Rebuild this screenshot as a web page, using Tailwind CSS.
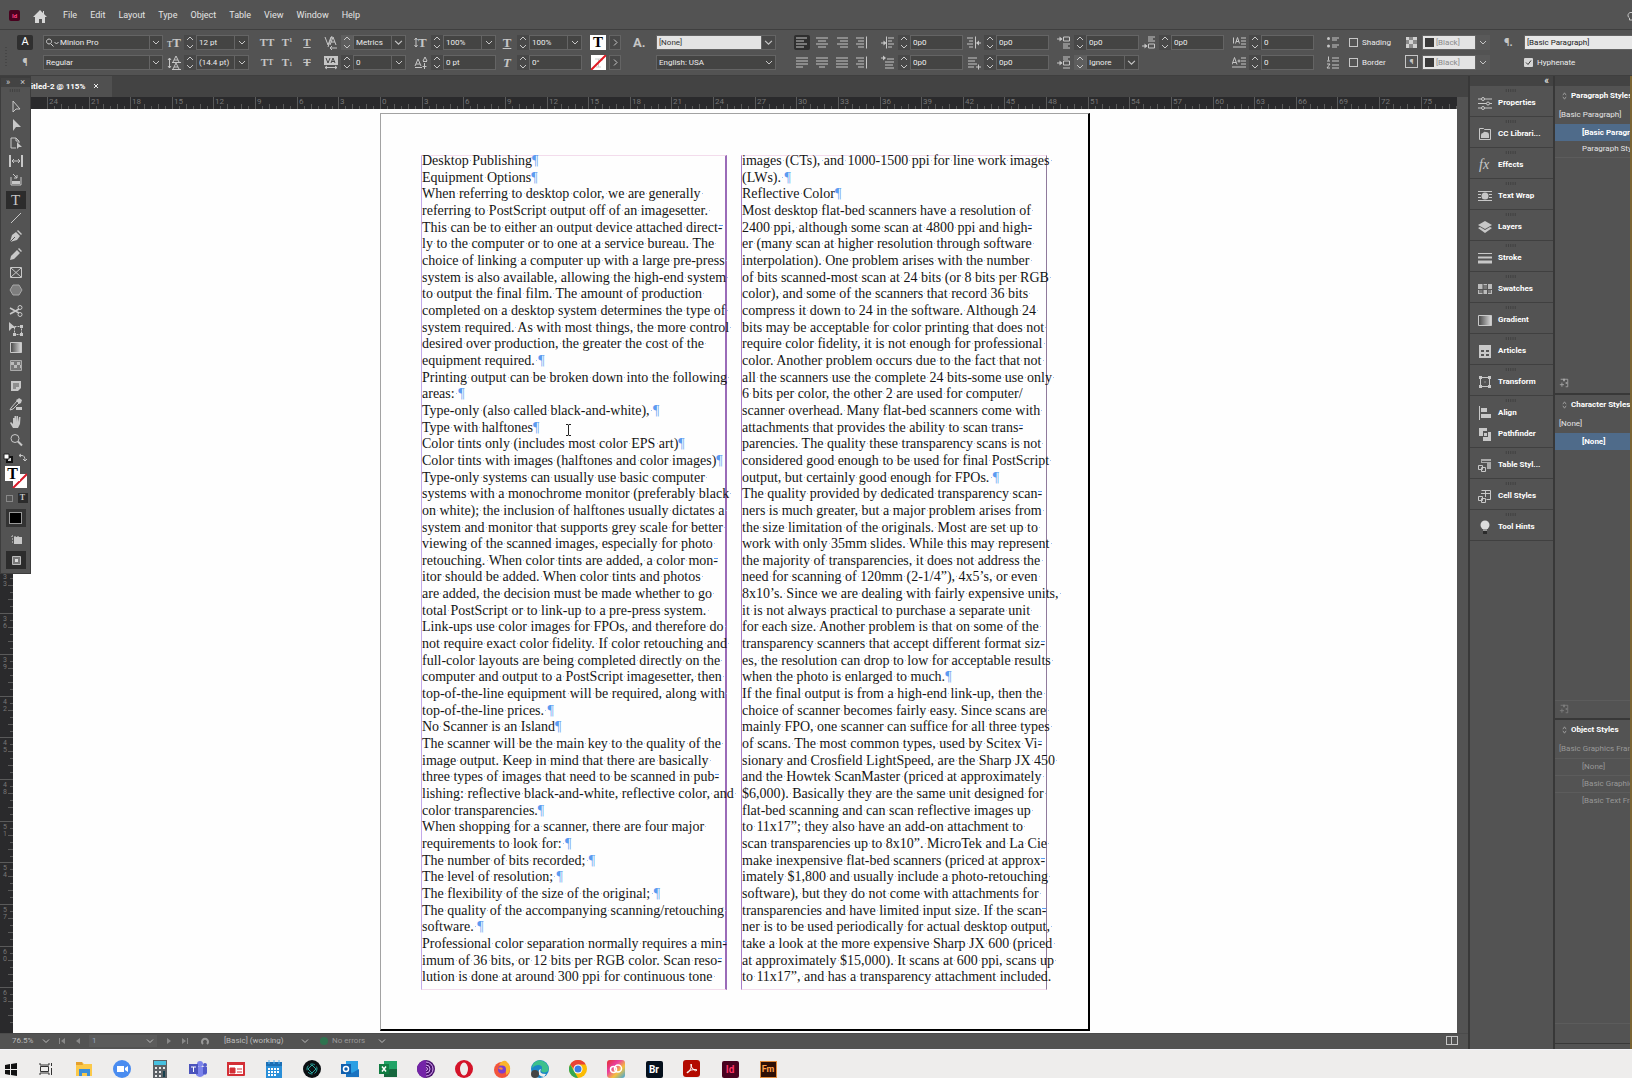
<!DOCTYPE html>
<html lang="en">
<head>
    <meta charset="UTF-8">
    <meta name="viewport" content="width=device-width, initial-scale=1.0">
    <title>Untitled-2 @ 115%</title>
    <script src="https://cdn.jsdelivr.net/npm/@tailwindcss/browser@4"></script>
</head>
<body class="overflow-hidden bg-[#535353] font-['Roboto','Open_Sans',sans-serif] text-[8px] text-[#e4e4e4]">

    <!-- shared icons -->
    <svg class="hidden">
        <symbol id="chev" viewBox="0 0 8 8"><path d="M1 2.5l3 3 3-3" fill="none" stroke="currentColor"/></symbol>
        <symbol id="next" viewBox="0 0 8 8"><path d="M3 1l3 3-3 3" fill="none" stroke="currentColor"/></symbol>
        <symbol id="step" viewBox="0 0 12 15"><path d="M3 5l3-3 3 3M3 10l3 3 3-3" fill="none" stroke="currentColor"/></symbol>
        <symbol id="lines-left" viewBox="0 0 14 14"><path d="M1 2.5h11M1 5.5h8M1 8.5h11M1 11.5h8" stroke="currentColor"/></symbol>
        <symbol id="lines-center" viewBox="0 0 14 14"><path d="M1 2.5h12M3 5.5h8M1 8.5h12M3 11.5h8" stroke="currentColor"/></symbol>
        <symbol id="lines-right" viewBox="0 0 14 14"><path d="M2 2.5h11M5 5.5h8M2 8.5h11M5 11.5h8" stroke="currentColor"/></symbol>
        <symbol id="lines-full" viewBox="0 0 14 14"><path d="M1 2.5h12M1 5.5h12M1 8.5h12M1 11.5h12" stroke="currentColor"/></symbol>
        <symbol id="lines-spine" viewBox="0 0 14 14"><path d="M1 2.5h8M3 5.5h6M1 8.5h8M3 11.5h6M11.5 1v12" stroke="currentColor"/></symbol>
        <symbol id="lines-jleft" viewBox="0 0 14 14"><path d="M1 2.5h12M1 5.5h12M1 8.5h12M1 11.5h7" stroke="currentColor"/></symbol>
        <symbol id="lines-jcenter" viewBox="0 0 14 14"><path d="M1 2.5h12M1 5.5h12M1 8.5h12M4 11.5h6" stroke="currentColor"/></symbol>
        <symbol id="indent-left" viewBox="0 0 14 14"><path d="M0 7.500h4M5.500 1v12M7 2.500h6M7 5.500h4M7 8.500h6M7 11.500h4" stroke="currentColor"/><path d="M2.500 5l3 2.500-3 2.500z" fill="currentColor"/></symbol>
        <symbol id="indent-right" viewBox="0 0 14 14"><path d="M0 2.500h6M2 5.500h4M0 8.500h6M2 11.500h4M8.500 1v12M10 7.500h4" stroke="currentColor"/><path d="M12 5l-3 2.500 3 2.500z" fill="currentColor"/></symbol>
        <symbol id="indent-first" viewBox="0 0 14 14"><path d="M0 2.500h4M6 3.500h7M4 6.500h9M4 9.500h8M4 12.500h9" stroke="currentColor"/><path d="M2 0l3 2.500-3 2.500z" fill="currentColor"/></symbol>
        <symbol id="indent-last" viewBox="0 0 14 14"><path d="M1 2.500h9M1 5.500h7M1 8.500h9M1 11.500h6M9 11.500h5M11.500 9v5" stroke="currentColor"/></symbol>
        <symbol id="space-before" viewBox="0 0 14 14"><path d="M0 3.500h5M6.500 1.500h6v4h-6zM6 8.500h7M6 10.500h5M6 12.500h7" fill="none" stroke="currentColor"/><path d="M2.500 1l3 2.500-3 2.500z" fill="currentColor"/></symbol>
        <symbol id="space-after" viewBox="0 0 14 14"><path d="M0 10.500h5M6 1.500h7M6 3.500h5M6 5.500h7M6.500 8.500h6v4h-6z" fill="none" stroke="currentColor"/><path d="M2.500 8l3 2.500-3 2.500z" fill="currentColor"/></symbol>
        <symbol id="space-between" viewBox="0 0 14 14"><path d="M0 7.500h5M6 1.500h7M6 3.500h5M6.500 5.500h6v4h-6zM6 12.500h7" fill="none" stroke="currentColor"/><path d="M2.500 5l3 2.500-3 2.500z" fill="currentColor"/></symbol>
        <symbol id="drop" viewBox="0 0 14 14"><path d="M1.500 2v6M3.500 8l2-6 2 6M4 6h3M9 2.500h5M9 5.500h5M9 8.500h5M1 11.500h13" fill="none" stroke="currentColor"/></symbol>
        <symbol id="drop-n" viewBox="0 0 14 14"><path d="M0 9l2.500-7L5 9M1 7h3M5.500 5.500h3M7 4v3M9 2.500h5M9 5.500h5M9 8.500h5M0 11.500h14" fill="none" stroke="currentColor"/></symbol>
        <symbol id="bullets" viewBox="0 0 14 14"><circle cx="2.500" cy="3" r="1.500" fill="currentColor"/><circle cx="2.500" cy="10.500" r="1.500" fill="currentColor"/><path d="M6 2.500h7M6 4.500h5M6 9.500h7M6 11.500h5" stroke="currentColor"/></symbol>
        <symbol id="numbers" viewBox="0 0 14 14"><path d="M2.500 1v4M1 5.500h3M1 8.500h3l-3 4h3M6 2.500h7M6 5.500h7M6 9.500h7M6 12.500h7" fill="none" stroke="currentColor"/></symbol>
        <symbol id="new-style" viewBox="0 0 12 12"><path d="M2 1.500h8.500v9H8M1 8h5M3.500 5.500v5" fill="none" stroke="currentColor"/><path d="M5 1h2v3H5zM8 5h2v2H8z" fill="currentColor"/></symbol>
        <symbol id="updown" viewBox="0 0 6 10"><path d="M1 4l2-3 2 3M1 6l2 3 2-3" fill="none" stroke="currentColor"/></symbol>
        <symbol id="grip" viewBox="0 0 15 4"><path d="M.5 0v4M3.500 0v4M6.500 0v4M9.500 0v4M12.500 0v4" stroke="#3b3b3b"/></symbol>
    </svg>

    <div class="flex h-screen flex-col">

        <!-- menu bar -->
        <header class="flex h-[30px] shrink-0 items-center border-b border-[#3f3f3f] pt-[2px] pl-[9px] text-[9px]">
            <span class="flex size-[11px] items-center justify-center rounded-xs bg-[#49021f] text-[6px] font-bold text-[#ff3f82]">Id</span>
            <button aria-label="Home" class="ml-3 size-4"><svg viewBox="0 0 16 16" fill="#d6d6d6"><path d="M8 2L1 9h2v6h4v-4h3v4h3V9h2L12 6V3h-1v2z"/></svg></button>
            <nav class="ml-[15px] flex flex-1 gap-[13px]">
                <a href="#">File</a>
                <a href="#">Edit</a>
                <a href="#">Layout</a>
                <a href="#">Type</a>
                <a href="#">Object</a>
                <a href="#">Table</a>
                <a href="#">View</a>
                <a href="#">Window</a>
                <a href="#">Help</a>
            </nav>
            <svg class="-mr-1 size-[10px]" viewBox="0 0 10 10"><path d="M3.500 9V7a3 3 0 1 1 3 0v2z" fill="none" stroke="#c8c8c8"/></svg>
        </header>

        <!-- control bar -->
        <form class="flex h-[46px] shrink-0 border-b border-[#3f3f3f] py-[5px] pl-[5px] text-[#c6c6c6] *:grid *:shrink-0 *:auto-rows-[15px] *:content-start *:gap-y-[5px] [&>div>div]:min-w-0 [&_button]:flex [&_button]:h-[15px] [&_button]:items-center [&_button]:justify-center [&_button_svg]:h-[15px] [&_svg]:shrink-0 [&_span]:shrink-0 [&_button]:shrink-0 [&_input[type=text]]:h-[15px] [&_input[type=text]]:w-0 [&_input[type=text]]:min-w-0 [&_input[type=text]]:flex-1 [&_input[type=text]]:border [&_input[type=text]]:border-[#646464] [&_input[type=text]]:bg-[#444443] [&_input[type=text]]:px-[2px] [&_input[type=text]]:text-[#ececec] [&_select]:h-[15px] [&_select]:min-w-0 [&_select]:flex-1 [&_select]:appearance-none [&_select]:border [&_select]:border-[#646464] [&_select]:px-[2px]">
            <div class="w-3"><svg class="mt-3 h-5 w-[3px]" viewBox="0 0 3 20"><path d="M1 0v20" stroke="#3b3b3b" stroke-dasharray="1 2"/></svg></div>

            <div class="w-4">
                <button type="button" class="rounded-xs bg-[#2f2f2f] text-[11px] text-white">A</button>
                <button type="button" class="text-[10px] font-bold">¶</button>
            </div>

            <div class="ml-[10px] w-[120px]">
                <div class="relative flex">
                    <svg class="absolute top-[3px] left-[2px] h-[9px] w-[14px]" viewBox="0 0 14 9"><path d="M4 1a2.500 2.500 0 1 0 .1 0M6 6l2.500 2.500M9.500 4l2 2 2-2" fill="none" stroke="#d0d0d0"/></svg>
                    <input type="text" aria-label="Font family" value="Minion Pro" class="indent-[14px]">
                    <button type="button" aria-label="Fonts" class="w-[13px] border border-l-0 border-[#646464] bg-[#444443]"><svg class="w-2"><use href="#chev"/></svg></button>
                </div>
                <div class="flex">
                    <input type="text" aria-label="Font style" value="Regular">
                    <button type="button" aria-label="Font styles" class="w-[13px] border border-l-0 border-[#646464] bg-[#444443]"><svg class="w-2"><use href="#chev"/></svg></button>
                </div>
            </div>

            <div class="ml-1 w-[82px]">
                <div class="flex">
                    <span class="mr-[3px] w-[14px] font-['Liberation_Serif',serif] text-[13px] leading-[15px] font-bold"><small class="text-[8px]">T</small>T</span>
                    <button type="button" aria-label="Step size" class="w-3 bg-[#484848]"><svg class="w-3"><use href="#step"/></svg></button>
                    <input type="text" aria-label="Font size" value="12 pt">
                    <button type="button" aria-label="Sizes" class="w-[14px] border border-l-0 border-[#646464] bg-[#444443]"><svg class="w-2"><use href="#chev"/></svg></button>
                </div>
                <div class="flex">
                    <svg class="mr-[3px] h-[15px] w-[14px]" viewBox="0 0 14 15"><path d="M2.500 3v10M1 5l1.500-2L4 5M1 11l1.500 2L4 11M6 7l3-6 3 6M7 5h4M6 14l3-6 3 6M7 12h4M5 7.500h9M5 14.500h9" fill="none" stroke="currentColor"/></svg>
                    <button type="button" aria-label="Step leading" class="w-3 bg-[#484848]"><svg class="w-3"><use href="#step"/></svg></button>
                    <input type="text" aria-label="Leading" value="(14.4 pt)">
                    <button type="button" aria-label="Leadings" class="w-[14px] border border-l-0 border-[#646464] bg-[#444443]"><svg class="w-2"><use href="#chev"/></svg></button>
                </div>
            </div>

            <div class="ml-2 w-[60px] grid-cols-3 font-['Liberation_Serif',serif] text-[11px] leading-none font-bold">
                <button type="button">TT</button>
                <button type="button">T<sup class="text-[6px]">1</sup></button>
                <button type="button" class="underline">T</button>
                <button type="button">T<span class="text-[8px]">T</span></button>
                <button type="button">T<sub class="text-[6px]">1</sub></button>
                <button type="button" class="line-through">T</button>
            </div>

            <div class="ml-[7px] w-[82px]">
                <div class="flex">
                    <svg class="mr-[3px] h-[15px] w-[14px]" viewBox="0 0 14 15"><path d="M1 2l3 8 3-8M6 10l3-8 3 8M7 7h4M8 1L4 12M6 13h7M8 11l-2 2 2 2" fill="none" stroke="currentColor"/></svg>
                    <button type="button" aria-label="Step kerning" class="w-3 bg-[#5e5e5e]"><svg class="w-3"><use href="#step"/></svg></button>
                    <select aria-label="Kerning" class="bg-[#444443] text-[#ececec]"><option>Metrics</option></select>
                    <svg class="pointer-events-none h-[15px] w-[14px] border border-l-0 border-[#646464] bg-[#444443] px-[2px]"><use href="#chev"/></svg>
                </div>
                <div class="flex">
                    <svg class="mr-[3px] h-[15px] w-[14px]" viewBox="0 0 14 15"><path d="M0 1h14v9H0z" fill="#c6c6c6"/><path d="M2 3l2 5 2-5M7 8l2-5 2 5M8 6.500h3" fill="none" stroke="#444"/><path d="M1 12.500h12M3 11l-2 1.500L3 14M11 11l2 1.500-2 1.500" fill="none" stroke="currentColor"/></svg>
                    <button type="button" aria-label="Step tracking" class="w-3 bg-[#484848]"><svg class="w-3"><use href="#step"/></svg></button>
                    <input type="text" aria-label="Tracking" value="0">
                    <button type="button" aria-label="Trackings" class="w-[14px] border border-l-0 border-[#646464] bg-[#444443]"><svg class="w-2"><use href="#chev"/></svg></button>
                </div>
            </div>

            <div class="ml-2 w-[82px]">
                <div class="flex">
                    <span class="mr-[3px] flex w-[14px] font-['Liberation_Serif',serif] text-[13px] leading-[15px] font-bold"><svg class="h-[15px] w-1" viewBox="0 0 4 15"><path d="M2 3v9M.5 5L2 3l1.500 2M.5 10L2 12l1.500-2" fill="none" stroke="currentColor"/></svg>T</span>
                    <button type="button" aria-label="Step vertical scale" class="w-3 bg-[#484848]"><svg class="w-3"><use href="#step"/></svg></button>
                    <input type="text" aria-label="Vertical scale" value="100%">
                    <button type="button" aria-label="Vertical scales" class="w-[14px] border border-l-0 border-[#646464] bg-[#444443]"><svg class="w-2"><use href="#chev"/></svg></button>
                </div>
                <div class="flex">
                    <svg class="mr-[3px] h-[15px] w-[14px]" viewBox="0 0 14 15"><path d="M1 11l3-7 3 7M2 9h4M1 12.500h7M9 6l2-4 2 4M9 6.500h4M10.500 8v6M8.500 11.500h4" fill="none" stroke="currentColor"/></svg>
                    <button type="button" aria-label="Step baseline shift" class="w-3 bg-[#484848]"><svg class="w-3"><use href="#step"/></svg></button>
                    <input type="text" aria-label="Baseline shift" value="0 pt">
                </div>
            </div>

            <div class="ml-1 w-[82px]">
                <div class="flex">
                    <span class="mr-[3px] w-[14px] text-center font-['Liberation_Serif',serif] text-[13px] leading-[15px] font-bold underline">T</span>
                    <button type="button" aria-label="Step horizontal scale" class="w-3 bg-[#484848]"><svg class="w-3"><use href="#step"/></svg></button>
                    <input type="text" aria-label="Horizontal scale" value="100%">
                    <button type="button" aria-label="Horizontal scales" class="w-[14px] border border-l-0 border-[#646464] bg-[#444443]"><svg class="w-2"><use href="#chev"/></svg></button>
                </div>
                <div class="flex">
                    <span class="mr-[3px] w-[14px] text-center font-['Liberation_Serif',serif] text-[13px] leading-[15px] font-bold italic">T</span>
                    <button type="button" aria-label="Step skew" class="w-3 bg-[#484848]"><svg class="w-3"><use href="#step"/></svg></button>
                    <input type="text" aria-label="Skew" value="0°">
                </div>
            </div>

            <div class="ml-2 w-[31px]">
                <div class="flex gap-[3px]">
                    <button type="button" class="w-4 bg-white font-['Liberation_Serif',serif] text-[15px] font-bold text-black">T</button>
                    <button type="button" aria-label="Fill" class="w-3 border border-[#646464] bg-[#484848]"><svg class="w-2"><use href="#next"/></svg></button>
                </div>
                <div class="flex gap-[3px]">
                    <button type="button" aria-label="No stroke" class="w-4"><svg class="w-[15px] bg-white" viewBox="0 0 15 15"><path d="M4 4h7v2M7.500 4v8M5 12h5" fill="none" stroke="#ccc"/><path d="M0 15L15 0" stroke="#e01b24" stroke-width="2"/></svg></button>
                    <button type="button" aria-label="Stroke" class="w-3 border border-[#646464] bg-[#484848]"><svg class="w-2"><use href="#next"/></svg></button>
                </div>
            </div>

            <div class="ml-3 w-[14px] text-[13px] leading-[15px] font-bold">A.</div>

            <div class="ml-[9px] w-[120px]">
                <div class="flex">
                    <select aria-label="Character style" class="bg-[#e4e4e4] pl-1 text-[#333]"><option>[None]</option></select>
                    <svg class="pointer-events-none h-[15px] w-[14px] border border-l-0 border-[#646464] bg-[#484848] px-[2px]"><use href="#chev"/></svg>
                </div>
                <div class="relative flex">
                    <select aria-label="Language" class="bg-[#444443] text-[#ececec]"><option>English: USA</option></select>
                    <svg class="pointer-events-none absolute right-[3px] h-[15px] w-2"><use href="#chev"/></svg>
                </div>
            </div>

            <div class="ml-[18px] w-[76px] grid-cols-4 gap-x-1 [&_svg]:w-[14px]">
                <button type="button" aria-label="Align left" class="rounded-xs bg-[#2f2f2f]"><svg><use href="#lines-left"/></svg></button>
                <button type="button" aria-label="Align center"><svg><use href="#lines-center"/></svg></button>
                <button type="button" aria-label="Align right"><svg><use href="#lines-right"/></svg></button>
                <button type="button" aria-label="Align towards spine"><svg><use href="#lines-spine"/></svg></button>
                <button type="button" aria-label="Justify left"><svg><use href="#lines-jleft"/></svg></button>
                <button type="button" aria-label="Justify center"><svg><use href="#lines-jcenter"/></svg></button>
                <button type="button" aria-label="Justify all"><svg><use href="#lines-full"/></svg></button>
                <button type="button" aria-label="Align away from spine"><svg><use href="#lines-spine"/></svg></button>
            </div>

            <div class="ml-[11px] w-[82px]">
                <div class="flex">
                    <svg class="mr-[3px] h-[15px] w-[14px]"><use href="#indent-left"/></svg>
                    <button type="button" aria-label="Step left indent" class="w-3 bg-[#484848]"><svg class="w-3"><use href="#step"/></svg></button>
                    <input type="text" aria-label="Left indent" value="0p0">
                </div>
                <div class="flex">
                    <svg class="mr-[3px] h-[15px] w-[14px]"><use href="#indent-first"/></svg>
                    <button type="button" aria-label="Step first line indent" class="w-3 bg-[#484848]"><svg class="w-3"><use href="#step"/></svg></button>
                    <input type="text" aria-label="First line indent" value="0p0">
                </div>
            </div>

            <div class="ml-1 w-[82px]">
                <div class="flex">
                    <svg class="mr-[3px] h-[15px] w-[14px]"><use href="#indent-right"/></svg>
                    <button type="button" aria-label="Step right indent" class="w-3 bg-[#484848]"><svg class="w-3"><use href="#step"/></svg></button>
                    <input type="text" aria-label="Right indent" value="0p0">
                </div>
                <div class="flex">
                    <svg class="mr-[3px] h-[15px] w-[14px]"><use href="#indent-last"/></svg>
                    <button type="button" aria-label="Step last line indent" class="w-3 bg-[#484848]"><svg class="w-3"><use href="#step"/></svg></button>
                    <input type="text" aria-label="Last line indent" value="0p0">
                </div>
            </div>

            <div class="ml-2 w-[82px]">
                <div class="flex">
                    <svg class="mr-[3px] h-[15px] w-[14px]"><use href="#space-before"/></svg>
                    <button type="button" aria-label="Step space before" class="w-3 bg-[#484848]"><svg class="w-3"><use href="#step"/></svg></button>
                    <input type="text" aria-label="Space before" value="0p0">
                </div>
                <div class="flex">
                    <svg class="mr-[3px] h-[15px] w-[14px]"><use href="#space-between"/></svg>
                    <button type="button" aria-label="Step space between" class="w-3 bg-[#5e5e5e]"><svg class="w-3"><use href="#step"/></svg></button>
                    <select aria-label="Space between" class="bg-[#444443] text-[#ececec]"><option>Ignore</option></select>
                    <svg class="pointer-events-none h-[15px] w-[14px] border border-l-0 border-[#646464] bg-[#444443] px-[2px]"><use href="#chev"/></svg>
                </div>
            </div>

            <div class="ml-[3px] w-[82px]">
                <div class="flex">
                    <svg class="mr-[3px] h-[15px] w-[14px]"><use href="#space-after"/></svg>
                    <button type="button" aria-label="Step space after" class="w-3 bg-[#484848]"><svg class="w-3"><use href="#step"/></svg></button>
                    <input type="text" aria-label="Space after" value="0p0">
                </div>
            </div>

            <div class="ml-2 w-[82px]">
                <div class="flex">
                    <svg class="mr-[3px] h-[15px] w-[14px]"><use href="#drop"/></svg>
                    <button type="button" aria-label="Step drop cap lines" class="w-3 bg-[#484848]"><svg class="w-3"><use href="#step"/></svg></button>
                    <input type="text" aria-label="Drop cap lines" value="0">
                </div>
                <div class="flex">
                    <svg class="mr-[3px] h-[15px] w-[14px]"><use href="#drop-n"/></svg>
                    <button type="button" aria-label="Step drop cap characters" class="w-3 bg-[#484848]"><svg class="w-3"><use href="#step"/></svg></button>
                    <input type="text" aria-label="Drop cap characters" value="0">
                </div>
            </div>

            <div class="ml-3 w-[14px]">
                <button type="button" aria-label="Bulleted list"><svg class="w-[14px]"><use href="#bullets"/></svg></button>
                <button type="button" aria-label="Numbered list"><svg class="w-[14px]"><use href="#numbers"/></svg></button>
            </div>

            <div class="ml-[9px] w-[46px] text-[#ececec]">
                <label class="flex items-center gap-1"><input type="checkbox" class="size-[9px] appearance-none border border-[#c6c6c6]">Shading</label>
                <label class="flex items-center gap-1"><input type="checkbox" class="size-[9px] appearance-none border border-[#c6c6c6]">Border</label>
            </div>

            <div class="ml-[10px] w-[85px]">
                <div class="relative flex">
                    <svg class="mr-1 h-[15px] w-[13px]" viewBox="0 0 13 15"><path d="M1 2h11v11H1z" fill="#8a8a8a"/><path d="M1 2h3v3H1zM8 2h4v3H8zM4 5h4v4H4zM1 9h3v4H1zM8 9h4v4H8z" fill="#d0d0d0"/></svg>
                    <select aria-label="Shading color" class="bg-[#e4e4e4] indent-[11px] text-[#8a8a8a]"><option>[Black]</option></select>
                    <span class="absolute top-[3px] left-[20px] size-[9px] bg-[#3a3a3a]"></span>
                    <svg class="pointer-events-none h-[15px] w-[14px] bg-[#595959] px-[3px]"><use href="#chev"/></svg>
                </div>
                <div class="relative flex">
                    <span class="mr-1 h-[13px] w-[13px] border border-[#c6c6c6] text-center leading-[12px] font-bold">¶</span>
                    <select aria-label="Border color" class="bg-[#e4e4e4] indent-[11px] text-[#8a8a8a]"><option>[Black]</option></select>
                    <span class="absolute top-[3px] left-[20px] size-[9px] bg-[#3a3a3a]"></span>
                    <svg class="pointer-events-none h-[15px] w-[14px] bg-[#595959] px-[3px]"><use href="#chev"/></svg>
                </div>
            </div>

            <div class="ml-[14px] w-3 text-[11px] leading-[15px] font-bold">¶.</div>

            <div class="ml-2 w-[120px] text-[#ececec]">
                <select aria-label="Paragraph style" class="w-full bg-[#e8e8e8] pl-1 text-[#222]"><option>[Basic Paragraph]</option></select>
                <label class="flex items-center gap-1">
                    <span class="relative flex">
                        <input type="checkbox" checked class="size-[9px] appearance-none rounded-[1px] bg-[#d6d6d6]">
                        <svg class="absolute size-[9px]" viewBox="0 0 9 9"><path d="M2 4.500l2 2 3-4" fill="none" stroke="#333"/></svg>
                    </span>
                    Hyphenate
                </label>
            </div>
        </form>

        <div class="flex min-h-0 flex-1">

            <!-- document window -->
            <section class="relative flex min-w-0 flex-1 flex-col">
                <div class="flex h-[21px] shrink-0 bg-[#434343]">
                    <div class="flex w-28 items-center gap-2 bg-[#505050] pl-[31px] font-bold text-white">
                        <span class="whitespace-nowrap">itled-2 @ 115%</span>
                        <button aria-label="Close document" class="size-[7px]"><svg viewBox="0 0 7 7"><path d="M1 1l4 4M5 1L1 5" stroke="#eee"/></svg></button>
                    </div>
                </div>
                <svg id="ruler-x" class="mr-[11px] h-3 shrink-0 bg-[#2a2a2c]"></svg>
                <div class="mr-[11px] flex min-h-0 flex-1 overflow-hidden bg-[#fefefe]">
                    <svg id="ruler-y" class="w-[13px] shrink-0 bg-[#2a2a2c]"></svg>
                    <main class="flex flex-1 items-start justify-center pt-1">
                        <article class="relative grid h-[918px] w-[710px] shrink-0 grid-cols-2 gap-x-[14px] border-t border-r-2 border-b-2 border-l border-t-[#a2a2a2] border-r-black border-b-black border-l-[#a2a2a2] bg-[#fefefe] pt-[41px] pr-[41px] pb-[39px] pl-10 font-['Liberation_Serif',serif] text-[14px] leading-[10px] text-[#151515]">
                            <div data-story class="grid auto-rows-fr border-t border-r-2 border-b border-l border-t-[#f3dcec] border-r-[#9a6bb8] border-b-[#f3dcec] border-l-[#c3a9ea] whitespace-pre">Desktop Publishing¶
Equipment Options¶
When referring to desktop color, we are generally 
referring to PostScript output off of an imagesetter. 
This can be to either an output device attached direct~
ly to the computer or to one at a service bureau. The 
choice of linking a computer up with a large pre-press 
system is also available, allowing the high-end system 
to output the final film. The amount of production 
completed on a desktop system determines the type of 
system required. As with most things, the more control 
desired over production, the greater the cost of the 
equipment required. ¶
Printing output can be broken down into the following 
areas: ¶
Type-only (also called black-and-white), ¶
Type with halftones¶
Color tints only (includes most color EPS art)¶
Color tints with images (halftones and color images)¶
Type-only systems can usually use basic computer 
systems with a monochrome monitor (preferably black 
on white); the inclusion of halftones usually dictates a 
system and monitor that supports grey scale for better 
viewing of the scanned images, especially for photo 
retouching. When color tints are added, a color mon~
itor should be added. When color tints and photos 
are added, the decision must be made whether to go 
total PostScript or to link-up to a pre-press system. 
Link-ups use color images for FPOs, and therefore do 
not require exact color fidelity. If color retouching and 
full-color layouts are being completed directly on the 
computer and output to a PostScript imagesetter, then 
top-of-the-line equipment will be required, along with 
top-of-the-line prices. ¶
No Scanner is an Island¶
The scanner will be the main key to the quality of the 
image output. Keep in mind that there are basically 
three types of images that need to be scanned in pub~
lishing: reflective black-and-white, reflective color, and 
color transparencies.¶
When shopping for a scanner, there are four major 
requirements to look for: ¶
The number of bits recorded; ¶
The level of resolution; ¶
The flexibility of the size of the original; ¶
The quality of the accompanying scanning/retouching 
software. ¶
Professional color separation normally requires a min~
imum of 36 bits, or 12 bits per RGB color. Scan reso~
lution is done at around 300 ppi for continuous tone </div>
                            <div data-story class="grid auto-rows-fr border border-t-[#f3dcec] border-r-[#8f7a9c] border-b-[#f3dcec] border-l-[#a87cc9] whitespace-pre">images (CTs), and 1000-1500 ppi for line work images 
(LWs). ¶
Reflective Color¶
Most desktop flat-bed scanners have a resolution of 
2400 ppi, although some scan at 4800 ppi and high~
er (many scan at higher resolution through software 
interpolation). One problem arises with the number 
of bits scanned-most scan at 24 bits (or 8 bits per RGB 
color), and some of the scanners that record 36 bits 
compress it down to 24 in the software. Although 24 
bits may be acceptable for color printing that does not 
require color fidelity, it is not enough for professional 
color. Another problem occurs due to the fact that not 
all the scanners use the complete 24 bits-some use only 
6 bits per color, the other 2 are used for computer/
scanner overhead. Many flat-bed scanners come with 
attachments that provides the ability to scan trans~
parencies. The quality these transparency scans is not 
considered good enough to be used for final PostScript 
output, but certainly good enough for FPOs. ¶
The quality provided by dedicated transparency scan~
ners is much greater, but a major problem arises from 
the size limitation of the originals. Most are set up to 
work with only 35mm slides. While this may represent 
the majority of transparencies, it does not address the 
need for scanning of 120mm (2-1/4”), 4x5’s, or even 
8x10’s. Since we are dealing with fairly expensive units, 
it is not always practical to purchase a separate unit 
for each size. Another problem is that on some of the 
transparency scanners that accept different format siz~
es, the resolution can drop to low for acceptable results 
when the photo is enlarged to much.¶
If the final output is from a high-end link-up, then the 
choice of scanner becomes fairly easy. Since scans are 
mainly FPO, one scanner can suffice for all three types 
of scans. The most common types, used by Scitex Vi~
sionary and Crosfield LightSpeed, are the Sharp JX 450 
and the Howtek ScanMaster (priced at approximately 
$6,000). Basically they are the same unit designed for 
flat-bed scanning and can scan reflective images up 
to 11x17”; they also have an add-on attachment to 
scan transparencies up to 8x10”. MicroTek and La Cie 
make inexpensive flat-bed scanners (priced at approx~
imately $1,800 and usually include a photo-retouching 
software), but they do not come with attachments for 
transparencies and have limited input size. If the scan~
ner is to be used periodically for actual desktop output, 
take a look at the more expensive Sharp JX 600 (priced 
at approximately $15,000). It scans at 600 ppi, scans up 
to 11x17”, and has a transparency attachment included.</div>
                            <!-- text cursor -->
                            <svg class="absolute top-[310px] left-[184px] h-3 w-[7px]" viewBox="0 0 7 12"><path d="M1 .5h2l.5.5.5-.5h2M3.500 1v10M1 11.500h2l.5-.5.5.5h2" fill="none" stroke="#222"/></svg>
                        </article>
                    </main>
                </div>

                <!-- status bar -->
                <footer class="flex h-4 shrink-0 items-center border-t border-[#4b4b4b] pr-[10px] pb-[2px] pl-3 text-[#bdbdbd] [&_svg]:size-2">
                    <span class="w-[30px]">76.5%</span>
                    <button aria-label="Zoom levels"><svg><use href="#chev"/></svg></button>
                    <button aria-label="First page" class="ml-2"><svg viewBox="0 0 8 8"><path d="M1 1h1v6H1zM7 1v6L3 4z" fill="#888"/></svg></button>
                    <button aria-label="Previous page" class="ml-2"><svg viewBox="0 0 8 8"><path d="M6 1v6L2 4z" fill="#888"/></svg></button>
                    <label class="ml-[7px] flex h-3 w-[68px] items-center bg-[#5b5b5b] pr-[3px]">
                        <input type="text" aria-label="Page" value="1" class="w-full min-w-0 pl-[3px] text-[#8fa3bd]">
                        <svg class="shrink-0"><use href="#chev"/></svg>
                    </label>
                    <button aria-label="Next page" class="ml-2"><svg viewBox="0 0 8 8"><path d="M2 1v6l4-3z" fill="#888"/></svg></button>
                    <button aria-label="Last page" class="ml-2"><svg viewBox="0 0 8 8"><path d="M6 1h1v6H6zM1 1v6l4-3z" fill="#888"/></svg></button>
                    <button aria-label="Open" class="ml-3"><svg viewBox="0 0 8 8"><path d="M2 7a3 3 0 1 1 4 0" fill="none" stroke="#999" stroke-width="2"/></svg></button>
                    <span class="ml-[15px] w-[77px]">[Basic] (working)</span>
                    <button aria-label="Profiles"><svg><use href="#chev"/></svg></button>
                    <span class="ml-[11px] size-2 rounded-full bg-[#2f7350]"></span>
                    <span class="ml-1 w-[46px] text-[#9a9a9a]">No errors</span>
                    <button aria-label="Preflight"><svg><use href="#chev"/></svg></button>
                    <button aria-label="Split view" class="ml-auto flex h-[9px] w-3 border border-[#c6c6c6]"><span class="h-full w-1/2 border-r border-[#c6c6c6]"></span></button>
                </footer>

                <!-- tools -->
                <aside class="absolute top-0 left-0 w-[31px] border border-t-2 border-[#3d3d3d] bg-[#535353] pb-1 text-[#c8c8c8] [&_button]:relative [&_button]:mx-auto [&_button]:flex [&_button]:h-[18px] [&_button]:w-5 [&_button]:items-center [&_button]:justify-center [&_button>svg]:size-[14px]">
                    <div class="flex h-[9px] items-center justify-between bg-[#434343] px-[5px] text-[9px] leading-[9px]"><span>»</span><span>×</span></div>
                    <svg class="mx-auto mt-[2px] mb-[6px] h-[3px] w-[15px]"><use href="#grip"/></svg>
                    <div>
                        <button aria-label="Selection"><svg viewBox="0 0 14 14"><path d="M4 1v11l3-3h4z" fill="none" stroke="currentColor"/></svg></button>
                        <button aria-label="Direct selection"><svg viewBox="0 0 14 14"><path d="M4 1v12l3-4h5z" fill="currentColor"/></svg></button>
                        <button aria-label="Page"><svg viewBox="0 0 14 14"><path d="M7 12H2V2h5l3 3v2M7 2v3h3" fill="none" stroke="currentColor"/><path d="M8 6v7l2-2h3z" fill="currentColor"/></svg></button>
                        <button aria-label="Gap"><svg viewBox="0 0 14 14"><path d="M1 1v12M13 1v12" stroke="currentColor" stroke-width="2"/><path d="M3 7h8M5 5L3 7l2 2M9 5l2 2-2 2" fill="none" stroke="currentColor"/></svg></button>
                        <button aria-label="Content collector"><svg viewBox="0 0 14 14"><path d="M2 5v8h10V5" fill="none" stroke="currentColor"/><path d="M3 9h8v3H3z" fill="currentColor"/><path d="M4 2l4 4M8 3v3H5" fill="none" stroke="currentColor"/></svg></button>
                    </div>
                    <div class="mt-[3px]">
                        <button aria-label="Type" class="bg-[#2c2c2c] font-['Liberation_Serif',serif] text-[15px]">T</button>
                        <button aria-label="Line"><svg viewBox="0 0 14 14"><path d="M2 12L12 2" stroke="currentColor"/></svg></button>
                        <button aria-label="Pen"><svg viewBox="0 0 14 14"><path d="M1 13l2-7 4-3 4 4-3 4zM8 2l1-1 4 4-1 1z" fill="currentColor"/><path d="M1 13l5-5" stroke="#535353"/></svg></button>
                        <button aria-label="Pencil"><svg viewBox="0 0 14 14"><path d="M1 13l1-4 6-6 3 3-6 6zM9 2l1-1 3 3-1 1z" fill="currentColor"/></svg></button>
                        <button aria-label="Rectangle frame"><svg viewBox="0 0 14 14"><path d="M1.500 2.500h11v10h-11zM2 3l10 9M12 3L2 12" fill="none" stroke="currentColor"/></svg></button>
                        <button aria-label="Polygon"><svg viewBox="0 0 14 14"><path d="M4 2h6l3 5-3 5H4L1 7z" fill="#7e7e7e" stroke="#a8a8a8"/></svg></button>
                    </div>
                    <div class="mt-[3px]">
                        <button aria-label="Scissors"><svg viewBox="0 0 14 14"><path d="M1 4l9 5M1 10l9-5" fill="none" stroke="currentColor" stroke-width="1.500"/><circle cx="11" cy="3.500" r="2" fill="none" stroke="currentColor"/><circle cx="11" cy="10.500" r="2" fill="none" stroke="currentColor"/></svg></button>
                        <button aria-label="Free transform"><svg viewBox="0 0 14 14"><path d="M5.500 4.500h7v8h-7z" fill="none" stroke="currentColor" stroke-dasharray="2 1"/><path d="M0 0v9l3-3h4zM4 11h3v3H4zM11 11h3v3h-3zM11 3h3v3h-3z" fill="currentColor"/></svg></button>
                        <button aria-label="Gradient swatch"><svg viewBox="0 0 14 14"><defs><linearGradient id="fade"><stop stop-color="#444"/><stop offset="1" stop-color="#ddd"/></linearGradient></defs><path d="M1.500 2.500h11v10h-11z" fill="url(#fade)" stroke="currentColor"/></svg></button>
                        <button aria-label="Gradient feather"><svg viewBox="0 0 14 14"><path d="M1.500 2.500h11v10h-11z" fill="#777" stroke="#aaa"/><path d="M2 4h3v3H2zM8 4h3v3H8zM5 7h3v3H5zM11 7h1v3h-1z" fill="#bbb"/></svg></button>
                    </div>
                    <div class="mt-[3px]">
                        <button aria-label="Note"><svg viewBox="0 0 14 14"><path d="M2 2h10v7l-3 3H2z" fill="currentColor"/><path d="M4 5h6M4 7h6M4 9h3" stroke="#555"/></svg></button>
                        <button aria-label="Eyedropper"><svg viewBox="0 0 14 14"><path d="M2 11l6-7 2 2-6 6-3 1z" fill="none" stroke="currentColor"/><path d="M7 3l2-1 1-1 3 2-1 3-2 1zM7 10h6v3H7z" fill="currentColor"/></svg></button>
                        <button aria-label="Hand"><svg viewBox="0 0 14 14"><path d="M4 13L1 8l1-1 2 2V3h1.500v4V1H7v6l.5-6H9v6l1-5h1.500L11 9l-2 4z" fill="currentColor"/></svg></button>
                        <button aria-label="Zoom"><svg viewBox="0 0 14 14"><circle cx="6" cy="5.500" r="4" fill="none" stroke="currentColor"/><path d="M9 8.500l4 4" stroke="currentColor" stroke-width="2"/></svg></button>
                    </div>
                    <div class="mt-1 flex justify-center gap-[5px] [&>svg]:size-[10px]">
                        <svg viewBox="0 0 10 10"><path d="M4 4h5v5H4z" stroke="#111" stroke-width="2" fill="#ccc"/><path d="M1 1h5v5H1z" fill="#fff" stroke="#222"/></svg>
                        <svg viewBox="0 0 10 10"><path d="M1 2.500h3q3 0 3 5M3 1L1 2.500 3 4M5 6l2 2 2-2" fill="none" stroke="currentColor"/></svg>
                    </div>
                    <svg class="mx-auto mt-[3px] h-[22px] w-[22px]" viewBox="0 0 22 22"><path d="M8 8h14v14H8z" fill="#fff"/><path d="M8 22L22 8" stroke="#d81b2a" stroke-width="2"/><path d="M0 0h15v15H0z" fill="#fff"/><text x="7.500" y="13" text-anchor="middle" font-family="Liberation Serif" font-weight="bold" font-size="16" fill="#000">T</text></svg>
                    <div class="mt-[5px] flex justify-center gap-[3px]">
                        <span class="m-[2px] size-[7px] border border-[#888]"></span>
                        <span class="size-[10px] bg-[#2c2c2c] text-center font-['Liberation_Serif',serif] leading-[10px] font-bold">T</span>
                    </div>
                    <button aria-label="Apply color" class="mt-[5px] bg-[#333]"><span class="h-3 w-[13px] border border-[#999] bg-black"></span></button>
                    <button aria-label="View options" class="mt-[3px]"><svg viewBox="0 0 14 14"><path d="M5 5h8v7H5z" fill="currentColor"/><path d="M3.500 3v8M2 4.500h9" stroke="#999" stroke-dasharray="2 1"/></svg></button>
                    <button aria-label="Screen mode" class="mt-[3px] bg-[#2c2c2c]"><svg viewBox="0 0 14 14"><path d="M3.500 3.500h8v8h-8z" fill="#777" stroke="#bbb"/><path d="M6 6h3v3H6z" fill="#ddd"/></svg></button>
                </aside>
            </section>

            <!-- collapsed panels -->
            <aside class="w-[87px] shrink-0 border-r-2 border-l-2 border-[#383838] font-bold text-white">
                <div class="h-[10px] bg-[#434343] pr-1 text-right text-[10px] leading-[9px] font-normal">«</div>
                <div id="dock"></div>
            </aside>

            <!-- style panels -->
            <aside class="grid w-[75px] shrink-0 grid-rows-[10px_309fr_324fr_324fr] overflow-hidden pb-[5px] whitespace-nowrap *:min-h-0 [&_h2]:flex [&_h2]:h-5 [&_h2]:items-center [&_h2]:gap-1 [&_h2]:pl-[7px] [&_h2]:font-bold [&_h2]:text-white [&_p]:flex [&_p]:h-[18px] [&_p]:items-center [&_p]:pl-1 [&_li]:flex [&_li]:h-[17px] [&_li]:items-center [&_li]:pl-[27px]">
                <div class="bg-[#434343]"></div>
                <section class="flex flex-col border-b-2 border-[#383838]">
                    <h2><svg class="h-2 w-[5px] text-[#aaa]"><use href="#updown"/></svg>Paragraph Styles</h2>
                    <p>[Basic Paragraph]</p>
                    <ul>
                        <li class="bg-[#4f6b8a] font-bold text-white">[Basic Paragraph]</li>
                        <li class="border-b border-[#5c5c5c]">Paragraph Style 1</li>
                    </ul>
                    <svg class="mt-auto mb-[5px] ml-1 size-[10px] text-[#aaa]"><use href="#new-style"/></svg>
                </section>
                <section class="flex flex-col border-b-2 border-[#383838]">
                    <h2><svg class="h-2 w-[5px] text-[#aaa]"><use href="#updown"/></svg>Character Styles</h2>
                    <p>[None]</p>
                    <ul>
                        <li class="bg-[#4f6b8a] font-bold text-white">[None]</li>
                    </ul>
                    <div class="mt-auto border-t border-[#5c5c5c] pt-[3px] pb-[4px] pl-1"><svg class="size-[10px] text-[#808080]"><use href="#new-style"/></svg></div>
                </section>
                <section class="flex flex-col border-b border-[#383838] text-[#989898]">
                    <h2><svg class="h-2 w-[5px] text-[#aaa]"><use href="#updown"/></svg>Object Styles</h2>
                    <p>[Basic Graphics Frame]</p>
                    <ul>
                        <li class="border-t border-[#5c5c5c]">[None]</li>
                        <li class="border-t border-[#5c5c5c]">[Basic Graphics Frame]</li>
                        <li class="border-t border-[#5c5c5c]">[Basic Text Frame]</li>
                    </ul>
                    <div class="mt-auto flex h-5 items-center justify-end border-t border-[#5c5c5c]"><svg class="h-2 w-[9px]" viewBox="0 0 9 8"><path d="M1 1h3l1 1h4v6H1z" fill="#8a8a8a"/></svg></div>
                </section>
            </aside>
            <div class="w-[2px] shrink-0 bg-[#7a6434]"></div>
        </div>

        <!-- taskbar -->
        <footer class="flex h-[29px] shrink-0 items-end border-t border-[#f4f4f8] bg-[#eeedec] [&_a]:flex [&_a]:w-[38px] [&_a]:justify-center [&_svg]:size-[18px]">
            <button aria-label="Start" class="mr-[5px] flex w-[22px] justify-center"><svg viewBox="0 0 18 18"><path d="M3 5l5-1v5H3zM9 4l6-1v6H9zM3 10h5v5l-5-1zM9 10h6v6l-6-1z" fill="#111"/></svg></button>
            <a href="#" aria-label="Task view"><svg viewBox="0 0 18 18"><path d="M3 3v2h9V3M3 15v-2h9v2M3.500 6.500h8v5h-8zM14.500 3v3M14.500 8v7" fill="none" stroke="#333"/></svg></a>
            <a href="#" aria-label="Files"><svg viewBox="0 0 18 18"><path d="M1 2h6l2 2h8v12H1z" fill="#fbc94a"/><path d="M1 2h6l1 3H1z" fill="#e5a02d"/><path d="M4 9h11v7h-3v-3H7v3H4z" fill="#3c8fd8"/></svg></a>
            <a href="#" aria-label="Meetings"><svg viewBox="0 0 18 18"><circle cx="9" cy="9" r="9" fill="#4a8cf0"/><path d="M4 6h7v6H4zM12 8l3-2v6l-3-2z" fill="#fff"/></svg></a>
            <a href="#" aria-label="Calculator"><svg viewBox="0 0 18 18"><path d="M2 0h14v18H2z" fill="#5c6166"/><path d="M3 1h12v4H3z" fill="#46c0e0"/><path d="M4 7h2v2H4zM8 7h2v2H8zM12 7h2v2h-2zM4 11h2v2H4zM8 11h2v2H8zM4 15h2v2H4zM8 15h2v2H8z" fill="#e8e8e8"/><path d="M12 11h2v6h-2z" fill="#153e4c"/></svg></a>
            <a href="#" aria-label="Teams"><svg viewBox="0 0 18 18"><circle cx="11" cy="4" r="3" fill="#7b83eb"/><circle cx="16" cy="5" r="2" fill="#5059c9"/><path d="M7 7h8v8q-4 4-8 0z" fill="#7b83eb"/><path d="M14 7h4v6q-1 3-4 1z" fill="#5059c9"/><path d="M0 4h9v10H0z" fill="#4b53bc"/><path d="M2 7h5M4.500 7v5" stroke="#fff"/></svg></a>
            <a href="#" aria-label="News"><svg viewBox="0 0 18 18"><path d="M0 2h18v13q0 1-1 1H1q-1 0-1-1z" fill="#d32f36"/><path d="M2 5h14v9H2z" fill="#fff"/><path d="M3 8h5v5H3zM10 9h5M10 12h5" fill="#d32f36" stroke="#d32f36"/></svg></a>
            <a href="#" aria-label="Calendar"><svg viewBox="0 0 18 18"><path d="M1 2h16v16H1z" fill="#2a8fd8"/><path d="M1 2h16v4H1z" fill="#1b6fb5"/><path d="M4 0v4M9 0v4M14 0v4" stroke="#5ab4f0"/><path d="M3 9h12M3 12h12M3 15h9" stroke="#fff" stroke-width="2" stroke-dasharray="2 1"/></svg></a>
            <a href="#" aria-label="Recorder"><svg viewBox="0 0 18 18"><circle cx="9" cy="9" r="9" fill="#0b0f12"/><circle cx="9" cy="9" r="5" fill="none" stroke="#2aa7a0" stroke-dasharray="5 2"/><path d="M9 5l4 4-4 4-4-4z" fill="none" stroke="#2aa7a0"/></svg></a>
            <a href="#" aria-label="Outlook"><svg viewBox="0 0 18 18"><path d="M5 1h12v15H5z" fill="#2b9fe3"/><path d="M5 9l6 4 7-4v8H5z" fill="#1a73c0"/><path d="M0 4h10v10H0z" fill="#0f5fae"/><circle cx="5" cy="9" r="2.500" fill="none" stroke="#fff" stroke-width="1.500"/></svg></a>
            <a href="#" aria-label="Excel"><svg viewBox="0 0 18 18"><path d="M5 1h13v16H5z" fill="#21a366"/><path d="M11 9h7v8H5v-4z" fill="#17683f"/><path d="M0 4h10v10H0z" fill="#107c41"/><path d="M3 6.500l4 5M7 6.500l-4 5" stroke="#fff" stroke-width="1.500"/></svg></a>
            <a href="#" aria-label="Tor"><svg viewBox="0 0 18 18"><circle cx="9" cy="9" r="9" fill="#4b1470"/><path d="M9 0a9 9 0 0 0 0 18z" fill="#7424a8"/><path d="M9 2a7 7 0 0 1 0 14M9 5a4 4 0 0 1 0 8M9 7.500a1.500 1.500 0 0 1 0 3" fill="none" stroke="#d9a8f5"/></svg></a>
            <a href="#" aria-label="Opera"><svg viewBox="0 0 18 18"><circle cx="9" cy="9" r="9" fill="#d4142a"/><ellipse cx="9" cy="9" rx="4" ry="6.500" fill="#eeedec"/></svg></a>
            <a href="#" aria-label="Firefox"><svg viewBox="0 0 18 18"><circle cx="9" cy="10" r="8" fill="#f2553c"/><path d="M6 5q3-5 7-4 5 4 4 9-1 4-4 5 1-8-7-10z" fill="#fbb42c"/><circle cx="9" cy="9.500" r="4" fill="#7a3fd0"/><path d="M5 8q4-2 5 1-2 2-5-1z" fill="#f98b3a"/></svg></a>
            <a href="#" aria-label="Edge"><svg viewBox="0 0 18 18"><circle cx="9" cy="9" r="9" fill="#1b86c8"/><path d="M2 4q6-7 13-1 4 5 2 8-4 3-7 0 3-6-3-6-3 0-6 3z" fill="#3cc08c"/><path d="M10 9q-3 5 5 5l-2 3q-7-1-5-7z" fill="#eeedec"/><circle cx="4" cy="14" r="4" fill="#444"/></svg></a>
            <a href="#" aria-label="Chrome"><svg viewBox="0 0 18 18"><circle cx="9" cy="9" r="9" fill="#fbbc05"/><path d="M1.200 4.500a9 9 0 0 1 15.600 0H9L5 9z" fill="#ea4335"/><path d="M1.200 4.500L5.500 12 9 18A9 9 0 0 1 1.200 4.500z" fill="#34a853"/><circle cx="9" cy="9" r="4.500" fill="#fff"/><circle cx="9" cy="9" r="3.500" fill="#3a7de8"/></svg></a>
            <a href="#" aria-label="Creative Cloud"><svg viewBox="0 0 18 18"><defs><linearGradient id="cc" x2="1" y2="1"><stop stop-color="#e4312b"/><stop offset=".35" stop-color="#e93ca0"/><stop offset=".65" stop-color="#f5c13c"/><stop offset="1" stop-color="#35a5e8"/></linearGradient></defs><rect width="18" height="18" rx="3" fill="url(#cc)"/><circle cx="6.500" cy="9.500" r="3" fill="none" stroke="#fff" stroke-width="1.500"/><circle cx="11" cy="8.500" r="3.500" fill="none" stroke="#fff" stroke-width="1.500"/></svg></a>
            <a href="#"><span class="flex size-[17px] items-center justify-center rounded-xs bg-[#05101c] text-[10px] font-bold text-white">Br</span></a>
            <a href="#" aria-label="Acrobat"><svg viewBox="0 0 18 18"><rect width="17" height="17" rx="3" fill="#b30b00"/><path d="M8 4q1 0 0 4-2 5-4 5-1-1 4-3 5-1 6 0-1 2-4-1-3-3-2-5z" fill="none" stroke="#fff"/></svg></a>
            <a href="#"><span class="flex size-[17px] items-center justify-center rounded-xs bg-[#49021f] text-[10px] font-bold text-[#ff3366]">Id</span></a>
            <a href="#"><span class="flex size-[17px] items-center justify-center border border-[#e08a3c] bg-[#2e0f05] text-[9px] font-bold text-[#ff9f4a]">Fm</span></a>
        </footer>
    </div>

    <script>
        // collapsed panel buttons, one inner list per tab group
        const dockGroups = [
            [["Properties", '<path d="M0 3h14M0 7.500h14M0 12h14" stroke="currentColor"/><g fill="#535353" stroke="currentColor"><circle cx="5" cy="3" r="1.500"/><circle cx="10" cy="7.500" r="1.500"/><circle cx="5" cy="12" r="1.500"/></g>']],
            [["CC Librari...", '<path d="M1.500 1.500h4l1 1h6v10h-11z" fill="none" stroke="currentColor"/><path d="M3 11V8q0-2 2-2 1-2 3-1 3 0 3 3v3z" fill="currentColor"/>']],
            [["Effects", '<text x="1" y="11" font-family="Liberation Serif" font-style="italic" font-weight="normal" font-size="14" fill="currentColor">fx</text>']],
            [["Text Wrap", '<path d="M0 2.500h14M0 5.500h3M11 5.500h3M0 8.500h3M11 8.500h3M0 11.500h14" stroke="currentColor"/><circle cx="7" cy="7" r="3.500" fill="currentColor"/>']],
            [["Layers", '<path d="M7 1l7 4-7 4-7-4z" fill="currentColor"/><path d="M0 8l2-1 5 3 5-3 2 1-7 5z" fill="currentColor"/>']],
            [["Stroke", '<path d="M0 2.500h14" stroke="currentColor"/><path d="M0 6.500h14" stroke="currentColor" stroke-width="2"/><path d="M0 11h14" stroke="currentColor" stroke-width="3"/>']],
            [["Swatches", '<path d="M0 2h14v10H0z" fill="#bbb"/><path d="M5 3h4v4H5zM1 8h4v3H1zM10 7h3v4h-3z" fill="#777"/><path d="M0 7.500h14M5 2v10M9.500 2v10" stroke="#535353"/>']],
            [["Gradient", '<path d="M.5 2.500h13v10H.5z" fill="url(#fade)" stroke="currentColor"/>']],
            [["Articles", '<path d="M1 1h12v13H1z" fill="currentColor"/><path d="M3 6h3v2H3zM8 6h3v2H8zM3 10h3v2H3zM8 10h3v2H8z" fill="#555"/>']],
            [["Transform", '<path d="M2.500 2.500h9v9h-9z" fill="none" stroke="currentColor"/><path d="M1 1h3v3H1zM10 1h3v3h-3zM1 10h3v3H1zM10 10h3v3h-3zM6.500 6.500h1v1h-1z" fill="currentColor"/>']],
            [
                ["Align", '<path d="M1.500 0v14" stroke="currentColor"/><path d="M3 2h6v4H3zM3 8h10v4H3z" fill="currentColor"/>'],
                ["Pathfinder", '<path d="M1 1h8v3H5v5H1z" fill="currentColor"/><path d="M6 6h3v3H6zM10 5h3v9H5v-4h5z" fill="currentColor"/>']
            ],
            [["Table Styl...", '<path d="M3 1h10v10H9V5H3z" fill="#aaa"/><path d="M4 3.500h9" stroke="#555"/><path d="M.5 7.500h4v4h-4zM3.500 9.500h4v4h-4z" fill="#535353" stroke="currentColor"/>']],
            [["Cell Styles", '<path d="M3.500 1.500h9v9h-4M3 4.500h9M7.500 2v6" fill="none" stroke="currentColor"/><path d="M.5 7.500h4v4h-4zM3.500 9.500h4v4h-4z" fill="#535353" stroke="currentColor"/>']],
            [["Tool Hints", '<circle cx="7" cy="5" r="4.500" fill="#ddd"/><path d="M5 9h4v2H5z" fill="#999"/><path d="M5 11h4v3H5z" fill="#2b2b2b"/>']]
        ];

        document.getElementById("dock").innerHTML = dockGroups.map(function (group) {
            const buttons = group.map(function (item) {
                return '<button class="flex h-[21px] w-full items-center gap-[6px] pl-2 text-left"><svg class="size-[14px] text-[#c8c8c8]" viewBox="0 0 14 14">' + item[1] + '</svg>' + item[0] + '</button>';
            }).join("");
            return '<div class="border-b border-[#404040] pt-[3px] pb-[3px]"><svg class="mx-auto h-[3px] w-[15px]"><use href="#grip"/></svg>' + buttons + '</div>';
        }).join("");

        // hidden characters: dots for spaces, blue pilcrows, soft hyphens
        const dot = '<span class="bg-[linear-gradient(#9cc0f0,#9cc0f0)] bg-[length:1px_1px] bg-center bg-no-repeat"> </span>';
        const pilcrow = '<span class="text-[#5b9bf0]">¶</span>';
        const softHyphen = '<span class="bg-[linear-gradient(#5b9bf0,#5b9bf0)] bg-[length:4px_1px] bg-[position:right_5px] bg-no-repeat">-</span>';

        document.querySelectorAll("[data-story]").forEach(function (story) {
            story.innerHTML = story.textContent.split("\n").map(function (line) {
                return "<div>" + line.split(" ").join(dot).replace("¶", pilcrow).replace("~", softHyphen) + "</div>";
            }).join("");
        });

        // rulers, three picas per labelled step
        const step = 41.63;

        function drawRulerX() {
            let out = "";
            for (let n = -8; n <= 25; n++) {
                const x = Math.round(380 + n * step);
                out += '<path d="M' + x + '.5 0v12" stroke="#5a5a5a"/>';
                out += '<text x="' + (x + 2) + '" y="7" font-size="8" fill="#777">' + Math.abs(n * 3) + '</text>';
                for (let k = 1; k < 6; k++) {
                    out += '<path d="M' + Math.round(x + k * step / 6) + '.5 12v-' + (k % 2 ? 3 : 5) + '" stroke="#5a5a5a"/>';
                }
            }
            document.getElementById("ruler-x").innerHTML = out;
        }

        function drawRulerY() {
            let out = "";
            for (let n = 0; n <= 21; n++) {
                const y = Math.round(4 + n * step);
                out += '<path d="M0 ' + y + '.5h13" stroke="#5a5a5a"/>';
                String(n * 3).split("").forEach(function (digit, i) {
                    out += '<text x="3" y="' + (y + 8 + i * 7) + '" font-size="7" fill="#777">' + digit + '</text>';
                });
                for (let k = 1; k < 6; k++) {
                    out += '<path d="M13 ' + Math.round(y + k * step / 6) + '.5h-' + (k % 2 ? 3 : 5) + '" stroke="#5a5a5a"/>';
                }
            }
            document.getElementById("ruler-y").innerHTML = out;
        }

        drawRulerX();
        drawRulerY();
    </script>
</body>
</html>
